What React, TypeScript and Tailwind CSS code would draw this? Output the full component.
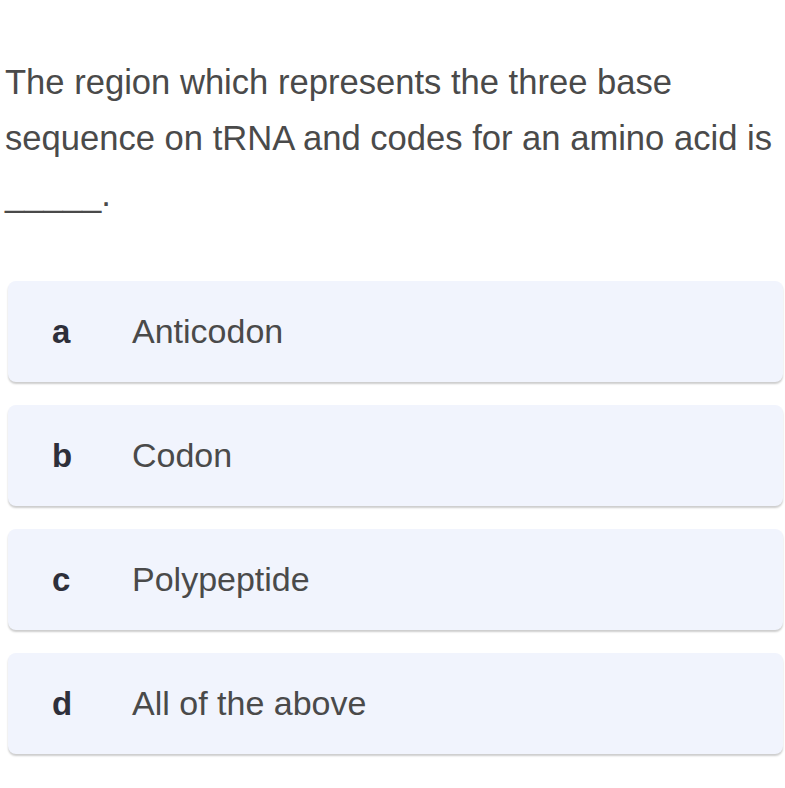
const options = [
  { key: 'a', label: 'Anticodon' },
  { key: 'b', label: 'Codon' },
  { key: 'c', label: 'Polypeptide' },
  { key: 'd', label: 'All of the above' },
];

export default function App() {
  return (
    <div className="min-h-[788px] w-[785px] overflow-hidden bg-white font-['Liberation_Sans',Arial,sans-serif]">
      <p className="whitespace-nowrap pl-[5px] pt-[54px] text-[34.6px] leading-[56px] text-[#4a4a4a]">
        The region which represents the three base
        <br />
        sequence on tRNA and codes for an amino acid is
        <br />
        _____.
      </p>

      <div className="mt-[59px] flex flex-col gap-[23px] pl-2 pr-[2px]">
        {options.map((o) => (
          <div
            key={o.key}
            className="flex h-[101px] items-center rounded-lg bg-[#f1f4fd] pl-[44px] shadow-[0_2px_2px_rgba(0,0,0,0.2)]"
          >
            <span className="w-[80px] text-[33px] font-bold text-[#2e2f3a]">{o.key}</span>
            <span className="text-[34px] text-[#4a4a4a]">{o.label}</span>
          </div>
        ))}
      </div>
    </div>
  );
}
